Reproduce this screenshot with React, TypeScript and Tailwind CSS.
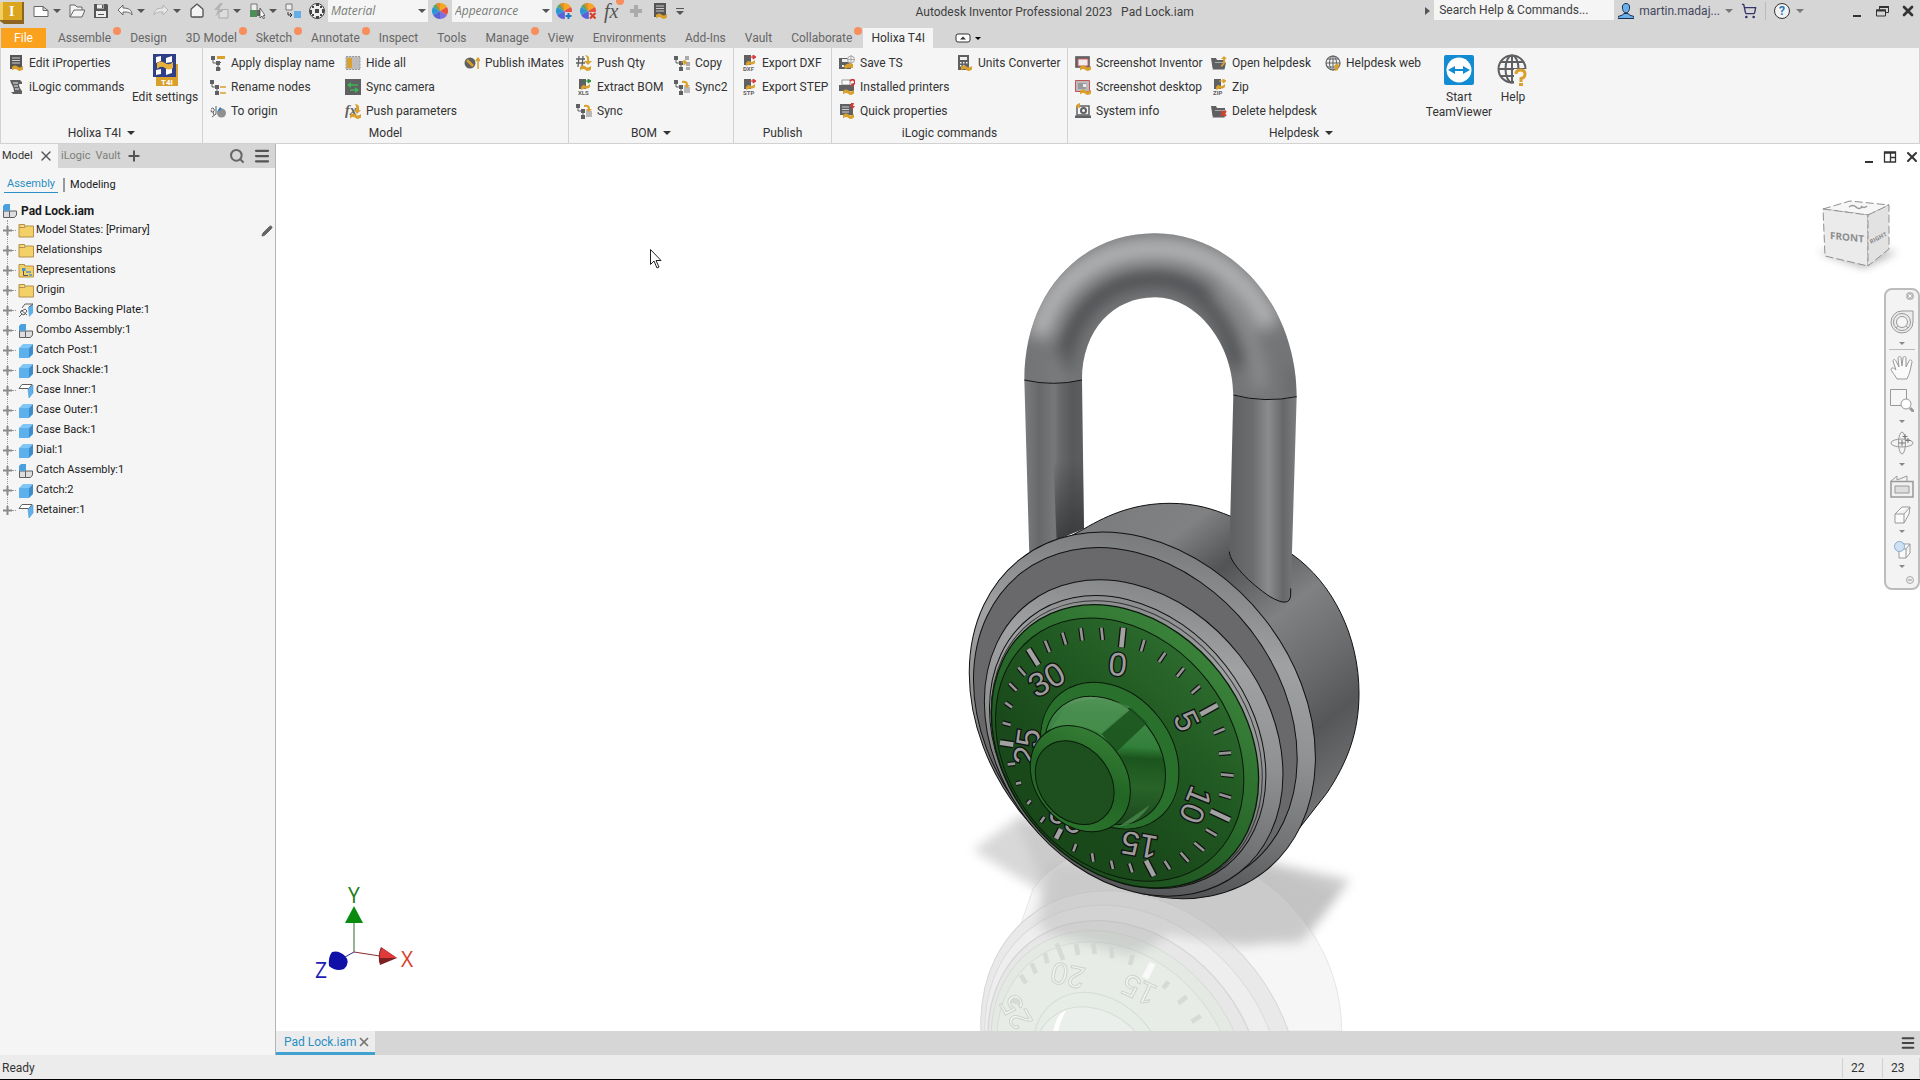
import type { ReactNode } from "react"
import { Search, Menu, Plus, X, Pencil, Home, ShoppingCart } from "lucide-react"

const G = "#5f6062"
const Y = "#d9a02c"

type IconName = keyof typeof icons

const Wheel = () => (
  <>
    <path d="M8 8L8 0A8 8 0 0 1 14.9 4Z" fill="#f5a623" />
    <path d="M8 8L14.9 4A8 8 0 0 1 14.9 12Z" fill="#e9503f" />
    <path d="M8 8L14.9 12A8 8 0 0 1 8 16Z" fill="#7d6fe0" />
    <path d="M8 8L8 16A8 8 0 0 1 1.1 12Z" fill="#5a62d8" />
    <path d="M8 8L1.1 12A8 8 0 0 1 1.1 4Z" fill="#2b95d6" />
    <path d="M8 8L1.1 4A8 8 0 0 1 8 0Z" fill="#5aa66a" />
    <path d="M8 8L4 1.1A8 8 0 0 1 8 0Z" fill="#f08a24" />
  </>
)

const Wave = ({ x = 4, y = 11 }: { x?: number; y?: number }) => (
  <path
    d={`M${x} ${y + 1}q3 -2.5 5.5 -.5t5.5 -.5v3.5q-3 2.5 -5.5 .5t-5.5 .5z`}
    fill={Y}
  />
)

const Tree = ({ x = 0 }: { x?: number }) => (
  <>
    <path d={`M${x + 2} 3v5h4M${x + 7} 8v6`} fill="none" stroke={G} />
    <path d={`M${x} 1h4v4h-4zM${x + 5} 6h4v4h-4zM${x + 5} 12h4v4h-4z`} fill={G} />
  </>
)

const Folder = () => (
  <path d="M0 3h5l1 2h8v2H4l-2 6H1.500zM3.500 7.500H15l-1.500 7H1.500z" fill={G} />
)

const File = ({ tag, arrow }: { tag: string; arrow: string }) => (
  <>
    <path d="M3 0h7v10H3z" fill={G} />
    <path d="M5 8q2-3 4-1.500T14 5v3q-2 2-4 1.500T5 11z" fill={Y} />
    <path d="M8 2h5M12 0l3 2-3 2z" stroke={arrow} fill={arrow} />
    <text x="2" y="16" fontSize="6" fontWeight="700" fill={G}>{tag}</text>
  </>
)

const icons = {
  file: <path d="M1 3.500h9l5 4v6H1zM10 3.500v4h5" fill="#fdfdfd" stroke="#666" />,
  open: <path d="M1 14V2h5l2 2h5v3M1 14L5 7h11l-3 7z" fill="#f4f4f4" stroke="#666" />,
  save: (
    <>
      <path d="M1 1h13l1 1v13H1z" fill="#555" />
      <path d="M4 1.500h7v4H4zM3 8h10v6H3z" fill="#eee" />
      <path d="M9 2h1.500v3H9zM5 11h6v1H5z" fill="#555" />
    </>
  ),
  undo: <path d="M1 7l5-5v3c6 0 9 2 9 7-2-3-4-3-9-3v3z" fill="#f4f4f4" stroke="#666" />,
  redo: <path d="M15 7l-5-5v3c-6 0-9 2-9 7 2-3 4-3 9-3v3z" fill="#e6e6e6" stroke="#b3b3b3" />,
  update: (
    <>
      <path d="M7 0L1 7h4l-3 7 8-8H6l4-6z" fill="#b4b4b4" />
      <path d="M6 8.500h3v-2h6V15H6z" fill="#ddd" stroke="#aaa" />
    </>
  ),
  select: (
    <>
      <path d="M2 1h6v7H2z" fill="#eee" stroke="#777" />
      <path d="M1 7h7v7H1z" fill="#4f8d57" />
      <path d="M8 7h4v6H8z" fill="#666" />
      <path d="M11 5v10l2-2 1.500 3 1-1-1.200-2.500H16z" fill="#fff" stroke="#333" strokeWidth=".7" />
    </>
  ),
  link: (
    <>
      <path d="M1 1h6v6H1z" fill="#eee" stroke="#777" />
      <path d="M9 8h7v7H9z" fill="#62aee6" />
      <path d="M3 9v3h3M5 10l2 2-2 2" fill="none" stroke="#333" />
    </>
  ),
  ball: (
    <>
      <circle cx="8" cy="8" r="7.500" fill="#eee" stroke="#444" />
      <path d="M6 6h4v4H6zM7 0h3v3H7zM1 7h2v4H1zM13 6h2v4h-2zM7 13h3v3H7zM3 3h2v2H3zM11 3h2v2h-2zM3 11h2v2H3zM11 11h2v2h-2z" fill="#444" />
    </>
  ),
  wheel: <Wheel />,
  wheelAdjust: (
    <>
      <Wheel />
      <path d="M9 9h7v7H9z" fill="#d8d8d8" />
      <path d="M12.500 10v6M9.500 13h6" stroke="#1c78c0" strokeWidth="2" />
    </>
  ),
  wheelClear: (
    <>
      <Wheel />
      <path d="M9 9h7v7H9z" fill="#d8d8d8" />
      <path d="M10 10l5.500 5.500M15.500 10L10 15.500" stroke="#d8402c" strokeWidth="2.200" />
    </>
  ),
  plus: <path d="M6 2h4v4h4v4h-4v4H6v-4H2V6h4z" fill="#aaa" />,
  doc: (
    <>
      <path d="M2 0h12v14H2z" fill="#555" />
      <path d="M4 3h8M4 5.500h8M4 8h8" stroke="#ccc" />
      <Wave />
    </>
  ),
  script: (
    <>
      <path d="M2 1h10l2 2v2h-3q0 2 1 4t2 3v3H5l-2-2h3q0-3-1-5T3 4z" fill={G} />
      <path d="M5 4h5M6 7h4M7 10h4" stroke="#eee" />
    </>
  ),
  treeName: (
    <>
      <Tree x={1} />
      <path d="M7 1h8v3H7z" fill={Y} />
      <path d="M9 7.500h2M9 14h2" stroke={G} />
    </>
  ),
  treeRename: (
    <>
      <Tree />
      <path d="M10 8h6M10 14h6" stroke={Y} strokeWidth="1.500" />
    </>
  ),
  origin: (
    <>
      <circle cx="11.500" cy="10" r="4.500" fill="#909090" />
      <path d="M6 3v8M6 11l-4 3" stroke={G} />
      <path d="M1 6q2-2 3 0t-1 3-2-2M3 9l1 3" stroke={G} fill="none" />
      <path d="M7 9l3-5 2 2z" fill="#2a7cc0" />
    </>
  ),
  hide: (
    <>
      <path d="M1 1.500h14v13H1z" fill="#bdbdbd" stroke="#999" strokeDasharray="2 1" />
      <path d="M2 3h5v10H2z" fill={Y} />
    </>
  ),
  camera: (
    <>
      <path d="M0 0h16v16H0z" fill={G} />
      <path d="M13 6H5M13 11H5" stroke="#3eb557" strokeWidth="1.500" />
      <path d="M6 3v6L2 6zM10 8v6l4-3z" fill="#3eb557" />
    </>
  ),
  params: (
    <>
      <text x="0" y="12" fontSize="14" fontStyle="italic" fontWeight="700" fontFamily="Liberation Serif, serif" fill={G}>fx</text>
      <path d="M10 1q5 0 4 6h2l-4 4-3-4h2q1-3-1-6z" fill={Y} />
      <Wave x={5} />
    </>
  ),
  mates: (
    <>
      <circle cx="6" cy="8" r="5.500" fill={G} />
      <path d="M3 5l6 6" stroke={Y} strokeWidth="2.500" />
      <path d="M14 14V4M12 6l2-3 2 3" stroke={Y} fill="none" strokeWidth="1.500" />
    </>
  ),
  qty: (
    <>
      <path d="M3 1L2 12M7 1L6 12M0 4h9M0 8h9" stroke={G} strokeWidth="1.300" />
      <path d="M9 0q5 0 4 6h3l-4 4-4-4h3q1-3-2-6z" fill={Y} />
      <Wave />
    </>
  ),
  xls: <File tag="XLS" arrow="#2f8a3c" />,
  dxf: <File tag="DXF" arrow="#d23a3a" />,
  stp: <File tag="STP" arrow="#d23a3a" />,
  zip: <File tag="ZIP" arrow={Y} />,
  sync: (
    <>
      <Tree />
      <path d="M10 7h3l1 1h2v6h-6z" fill="#b9b9b9" />
      <path d="M8 2q6-1 6 4h2l-3 3-3-3h2q0-3-4-2z" fill={Y} />
    </>
  ),
  copy: (
    <>
      <Tree />
      <path d="M11 1h4v4h-4zM12 7h4v4h-4zM12 12h4v3h-4z" fill="#aaa" />
      <path d="M7 7h5M10 5l3 2.500-3 2.500z" stroke={Y} fill={Y} />
    </>
  ),
  disk: (
    <>
      <path d="M0 3h12v11H0z" fill={G} />
      <path d="M3 4h6v3H3zM3 10h2v2H3z" fill="#eee" />
      <circle cx="12" cy="4.500" r="3.500" fill="#eee" stroke="#aaa" />
      <path d="M12 0v9M8 4.500h8" stroke="#aaa" />
      <path d="M5 11q4-4 9-2v4q-5-1-8 1z" fill={Y} />
    </>
  ),
  printer: (
    <>
      <path d="M3 1h8v5H3z" fill="#fafafa" stroke="#999" />
      <path d="M0 6h15v6H0z" fill={G} />
      <path d="M11 2q3-3 4.500 0T13 5.500V8" fill="none" stroke="#d23a3a" strokeWidth="1.800" />
      <Wave />
    </>
  ),
  quick: (
    <>
      <path d="M1 1h13v11H1z" fill={G} />
      <path d="M3 4h7M3 6.500h7M3 9h7" stroke="#ccc" />
      <path d="M12 0h3l-1 3h2l-4 5 1-4h-2z" fill="#d23a3a" />
      <Wave />
    </>
  ),
  calc: (
    <>
      <path d="M1 0h11v15H1z" fill={G} />
      <path d="M3 2h7v3H3zM3 7h1.500v1.500H3zM6 7h1.500v1.500H6zM9 7h1.500v1.500H9zM3 10h1.500v1.500H3zM6 10h1.500v1.500H6z" fill="#f0f0f0" />
      <Wave y={11} />
    </>
  ),
  shotApp: (
    <>
      <path d="M.5 1.500h14v11H.5z" fill="#5f6062" stroke="#777" />
      <path d="M3 4h10v7H3z" fill="#eee" stroke="#d06060" />
      <Wave x={5} />
    </>
  ),
  shotDesk: (
    <>
      <path d="M.5 1.500h14v11H.5z" fill="#bbb" stroke="#c25555" />
      <path d="M3 4h8v6H3z" fill="#999" />
      <path d="M8 5h3v3H8z" fill="#eee" />
      <Wave x={5} />
    </>
  ),
  system: (
    <>
      <path d="M2 3h12v9H2z" fill="#f5f5f5" stroke={G} strokeWidth="1.500" />
      <path d="M0 12.500h16V15H0z" fill={G} />
      <circle cx="8.500" cy="7.500" r="2.500" fill="none" stroke={G} strokeWidth="2" />
      <path d="M1 4q0-3 4-4v5z" fill={Y} />
    </>
  ),
  helpOpen: (
    <>
      <Folder />
      <path d="M10 10q3-1 2-6h-2l3-3 3 3h-2q1 6-4 8z" fill={Y} />
    </>
  ),
  helpDelete: (
    <>
      <Folder />
      <path d="M10 8l5 5M15 8l-5 5" stroke="#d8402c" strokeWidth="2" />
    </>
  ),
  web: (
    <>
      <path d="M8 1v13M1 8h14M2.500 4h11M2.500 12h8" stroke={G} />
      <circle cx="8" cy="8" r="7" fill="none" stroke={G} strokeWidth="1.200" />
      <ellipse cx="8" cy="8" rx="3.500" ry="7" fill="none" stroke={G} />
      <path d="M10 16v-4l-1-1 3-3 3 3-2 1v3z" fill={Y} />
    </>
  ),
  user: (
    <>
      <path d="M0 15.500v-2q5-1 6-3h4q1 2 6 3v2z" fill="#6ab0ea" stroke="#1d2f4a" />
      <path d="M8 .5c4 0 4 4 3 7s-5 3-6 0-1-7 3-7z" fill="#6ab0ea" stroke="#1d2f4a" />
    </>
  ),
  folder: (
    <path d="M1 3V1.500h5.500V3H15.500V14H1zM1 4.500h6V3" fill="#f4d168" stroke="#b5914a" />
  ),
  folderTree: (
    <>
      <path d="M1 3V1.500h5.500V3H15.500V14H1z" fill="#f4d168" stroke="#b5914a" />
      <path d="M5.500 8v4.500H10" fill="none" stroke="#555" />
      <path d="M4 5h3.500v3H4z" fill="#4b94c8" />
      <path d="M8 9h5M11 12h3" stroke="#4b94c8" strokeWidth="1.500" />
    </>
  ),
  plate: (
    <>
      <path d="M10 4l5-3v9l-4 4z" fill="#5fb0ea" />
      <path d="M4 5l3-4h8l-4 3M1 14l3-3M3 7l6 5M4 11l-2-2 5-3 2 2-3 4z" fill="#f4f4f4" stroke={G} />
    </>
  ),
  assembly: (
    <>
      <path d="M1.500 8h6v6.500h-6zM7.500 8h7v4l-2 2.500h-5z" fill="#ddd" stroke={G} />
      <path d="M1 3l2-2h5v6l-1 1H1z" fill="#4aa0dd" />
    </>
  ),
  part: (
    <>
      <path d="M1 5h10v10H1z" fill="#5cb0ec" />
      <path d="M1 5l4-4h10l-4 4z" fill="#7fc6f6" />
      <path d="M15 1v10l-4 4V5z" fill="#3d8ccb" />
    </>
  ),
  sheet: (
    <>
      <path d="M1 5.500l3-4h10l-3 4z" fill="#fff" stroke={G} />
      <path d="M10 6l5-4v8l-4 5z" fill="#5fb0ea" stroke="#3f90cc" strokeWidth=".5" />
    </>
  ),
}

const Icon = ({ name }: { name: IconName }) => (
  <svg viewBox="0 0 16 16" className="h-4 w-4 shrink-0" aria-hidden="true">
    {icons[name]}
  </svg>
)

const Caret = ({ className = "text-[#555]" }: { className?: string }) => (
  <svg viewBox="0 0 8 4" className={`h-1 w-2 shrink-0 ${className}`} aria-hidden="true">
    <path d="M0 0h8L4 4z" fill="currentColor" />
  </svg>
)

const Tool = ({ name, label, menu }: { name: IconName; label: string; menu?: boolean }) => (
  <button aria-label={label} className="flex items-center gap-1">
    <Icon name={name} />
    {menu && <Caret />}
  </button>
)

const Combo = ({ label }: { label: string }) => (
  <div className="relative h-[22px] w-[100px]">
    <select
      aria-label={label}
      className="h-full w-full appearance-none bg-[#f5f5f5] pl-[3px] pb-px text-xs italic text-[#777d77] font-[Open_Sans,sans-serif]"
    >
      <option>{label}</option>
    </select>
    <Caret className="absolute right-0.5 top-[9px] text-[#555]" />
  </div>
)

const TitleBar = () => (
  <header className="flex h-7 items-start">
    <svg viewBox="0 0 24 24" className="h-6 w-6" role="img" aria-label="Inventor">
      <path d="M0 4l4-2h20v22H4l-4-3z" fill="#8d6420" />
      <path d="M0 3l3-1v18H0z" fill="#f1cf62" />
      <path d="M3 2h19v18H3z" fill="#dca51f" />
      <text x="9" y="16" fontSize="14" fontWeight="700" fontFamily="Liberation Serif, serif" fill="#fff">I</text>
    </svg>
    <div className="ml-[9px] flex h-[22px] items-center gap-2">
      <Tool name="file" label="New" menu />
      <Tool name="open" label="Open" />
      <Tool name="save" label="Save" />
      <Tool name="undo" label="Undo" menu />
      <Tool name="redo" label="Redo" menu />
      <button aria-label="Home">
        <Home className="h-4 w-4 fill-[#f4f4f4] text-[#555]" />
      </button>
      <Tool name="update" label="Update" menu />
      <Tool name="select" label="Select" menu />
      <Tool name="link" label="Assign" />
      <Tool name="ball" label="Material browser" />
    </div>
    <div className="ml-[3px] flex items-center gap-1">
      <Combo label="Material" />
      <Tool name="wheel" label="Appearance browser" />
      <Combo label="Appearance" />
    </div>
    <div className="ml-1 flex h-[22px] items-center gap-2">
      <Tool name="wheelAdjust" label="Adjust appearance" />
      <Tool name="wheelClear" label="Clear appearance" />
      <button aria-label="Parameters" className="relative w-4 text-left font-[Liberation_Serif,serif] text-xl leading-4 italic text-[#555]">
        fx
        <span className="absolute -right-1 -top-1.5 h-2 w-2 rounded-full bg-[#f78e5c]" />
      </button>
      <Tool name="plus" label="Add" />
      <Tool name="doc" label="iProperties" />
      <button aria-label="Customize" className="flex flex-col items-center gap-0.5">
        <span className="h-px w-2 bg-[#555]" />
        <Caret />
      </button>
    </div>
    <h1 className="flex-1 text-center leading-6 whitespace-pre text-[#3f3f3f]">
      {"Autodesk Inventor Professional 2023   Pad Lock.iam"}
    </h1>
    <div className="flex h-[22px] items-center">
      <svg viewBox="0 0 5 8" className="mr-1 h-2 w-[5px]" aria-hidden="true">
        <path d="M0 0l5 4-5 4z" fill="#555" />
      </svg>
      <input
        aria-label="Search"
        placeholder="Search Help & Commands..."
        className="mr-1 h-5 w-[180px] self-start bg-[#f5f5f5] px-[5px] placeholder:text-[#3f3f3f] placeholder:opacity-100"
      />
      <button className="flex items-center gap-[5px] text-[#44475c]">
        <Icon name="user" />
        martin.madaj...
        <Caret className="text-[#777]" />
      </button>
      <button aria-label="Store" className="ml-2">
        <ShoppingCart className="h-4 w-4 text-[#34346c]" />
      </button>
      <span className="mx-2 h-[18px] w-px bg-[#bbb]" />
      <button aria-label="Help" className="flex items-center gap-1.5">
        <span className="flex h-4 w-4 items-center justify-center rounded-full border border-[#333] bg-[#f2f2f2] font-bold text-[#2a78b8]">?</span>
        <Caret className="text-[#777]" />
      </button>
      <div className="ml-[46px] mr-1 flex items-center gap-[11px] text-[#333]">
        <button aria-label="Minimize">
          <svg viewBox="0 0 14 14" className="h-3.5 w-3.5"><path d="M3 11h8v2H3z" fill="currentColor" /></svg>
        </button>
        <button aria-label="Restore">
          <svg viewBox="0 0 14 14" className="h-3.5 w-3.5">
            <path d="M4.500 5.500v-3h9v6h-3M1.500 6h9v6h-9z" fill="none" stroke="currentColor" />
            <path d="M4 2h10v2H4zM1 5.500h10v2H1z" fill="currentColor" />
          </svg>
        </button>
        <button aria-label="Close"><X className="h-4 w-4" strokeWidth={4} /></button>
      </div>
    </div>
  </header>
)

const tabs = [
  { label: "Assemble", dot: true },
  { label: "Design" },
  { label: "3D Model", dot: true },
  { label: "Sketch", dot: true },
  { label: "Annotate", dot: true },
  { label: "Inspect" },
  { label: "Tools" },
  { label: "Manage", dot: true },
  { label: "View" },
  { label: "Environments" },
  { label: "Add-Ins" },
  { label: "Vault" },
  { label: "Collaborate", dot: true },
]

const TabRow = () => (
  <nav className="flex h-5 items-stretch pl-px leading-5 text-[#666]">
    <button className="w-[45px] bg-[#faa21e] text-white">File</button>
    <div className="ml-0.5 flex">
      {tabs.map((tab) => (
        <button key={tab.label} className="relative pl-2.5 pr-[9px]">
          {tab.label}
          {tab.dot && <span className="absolute -right-px -top-px h-2 w-2 rounded-full bg-[#f78e5c]" />}
        </button>
      ))}
    </div>
    <button className="ml-0.5 bg-[#f5f5f5] px-2 text-[#333]">Holixa T4I</button>
    <button aria-label="Ribbon display" className="ml-[22px] flex items-center gap-1">
      <svg viewBox="0 0 16 10" className="h-2.5 w-4">
        <rect x="1" y="1" width="14" height="8" rx="2" fill="#fff" stroke="#333" />
        <path d="M5 6.500h6L8 3.500z" fill="#333" />
      </svg>
      <svg viewBox="0 0 6 3" className="h-[3px] w-1.5"><path d="M0 0h6L3 3z" fill="#000" /></svg>
    </button>
  </nav>
)

type Item = { icon: IconName; label: string }

const Column = ({ items, className = "" }: { items: Item[]; className?: string }) => (
  <div className={className}>
    {items.map((item) => (
      <button key={item.label} className="flex h-6 items-center gap-[5px] whitespace-nowrap">
        <Icon name={item.icon} />
        {item.label}
      </button>
    ))}
  </div>
)

const Group = ({ title, menu, className, children }: { title: string; menu?: boolean; className: string; children: ReactNode }) => (
  <section className={`flex shrink-0 flex-col border-[#d2d2d2] ${className}`}>
    <div className="flex flex-1 pl-[7px] pt-[3px]">{children}</div>
    <h2 className="flex h-5 items-center justify-center gap-1.5">
      {title}
      {menu && <Caret className="text-[#333]" />}
    </h2>
  </section>
)

const BigButton = ({ label, className = "", children }: { label: ReactNode; className?: string; children: ReactNode }) => (
  <button className={`flex flex-col items-center gap-1 pt-[3px] leading-[15px] ${className}`}>
    {children}
    <span>{label}</span>
  </button>
)

const Ribbon = () => (
  <div className="flex h-24 overflow-hidden border-x border-b border-[#d2d2d2] bg-[#f5f5f5] text-[#333]">
    <Group title="Holixa T4I" menu className="w-[202px] border-r">
      <Column
        className="w-[121px]"
        items={[
          { icon: "doc", label: "Edit iProperties" },
          { icon: "script", label: "iLogic commands" },
        ]}
      />
      <BigButton label="Edit settings" className="w-[72px] whitespace-nowrap">
        <svg viewBox="0 0 32 32" className="h-8 w-8">
          <path d="M7 10h22v22H7z" fill="#d9a02c" />
          <path d="M4 0h23v23H4z" fill="#2f3f87" />
          <path d="M7 3l5-1v5l-5 2zM17 4l6-2v6l-6 1zM7 16l5-1v5l-5 1zM17 15l6-1v5l-6 2z" fill="#fff" />
          <path d="M8 9q4-3 8 0t8-1v6q-4 3-8 0t-8 1z" fill="#e8b13a" />
          <text x="12" y="31" fontSize="8" fontWeight="700" fill="#fff">T4I</text>
        </svg>
      </BigButton>
    </Group>
    <Group title="Model" className="w-[366px] border-r">
      <Column
        className="w-[135px]"
        items={[
          { icon: "treeName", label: "Apply display name" },
          { icon: "treeRename", label: "Rename nodes" },
          { icon: "origin", label: "To origin" },
        ]}
      />
      <Column
        className="w-[119px]"
        items={[
          { icon: "hide", label: "Hide all" },
          { icon: "camera", label: "Sync camera" },
          { icon: "params", label: "Push parameters" },
        ]}
      />
      <Column items={[{ icon: "mates", label: "Publish iMates" }]} />
    </Group>
    <Group title="BOM" menu className="w-[165px] border-r">
      <Column
        className="w-[98px]"
        items={[
          { icon: "qty", label: "Push Qty" },
          { icon: "xls", label: "Extract BOM" },
          { icon: "sync", label: "Sync" },
        ]}
      />
      <Column
        items={[
          { icon: "copy", label: "Copy" },
          { icon: "sync", label: "Sync2" },
        ]}
      />
    </Group>
    <Group title="Publish" className="w-[98px] border-r">
      <Column
        items={[
          { icon: "dxf", label: "Export DXF" },
          { icon: "stp", label: "Export STEP" },
        ]}
      />
    </Group>
    <Group title="iLogic commands" className="w-[236px] border-r">
      <Column
        className="w-[118px]"
        items={[
          { icon: "disk", label: "Save TS" },
          { icon: "printer", label: "Installed printers" },
          { icon: "quick", label: "Quick properties" },
        ]}
      />
      <Column items={[{ icon: "calc", label: "Units Converter" }]} />
    </Group>
    <Group title="Helpdesk" menu className="w-[466px]">
      <Column
        className="w-[136px]"
        items={[
          { icon: "shotApp", label: "Screenshot Inventor" },
          { icon: "shotDesk", label: "Screenshot desktop" },
          { icon: "system", label: "System info" },
        ]}
      />
      <Column
        className="w-[114px]"
        items={[
          { icon: "helpOpen", label: "Open helpdesk" },
          { icon: "zip", label: "Zip" },
          { icon: "helpDelete", label: "Delete helpdesk" },
        ]}
      />
      <Column className="w-[98px]" items={[{ icon: "web", label: "Helpdesk web" }]} />
      <BigButton label={<>Start<br />TeamViewer</>} className="w-[72px]">
        <svg viewBox="0 0 32 32" className="h-8 w-8">
          <rect x="1" y="1" width="30" height="30" rx="2" fill="#138bd3" />
          <circle cx="16" cy="16" r="12.500" fill="#fff" />
          <path d="M5 16l7-4v3h8v-3l7 4-7 4v-3h-8v3z" fill="#138bd3" />
        </svg>
      </BigButton>
      <BigButton label="Help" className="w-9">
        <svg viewBox="0 0 32 32" className="h-8 w-8">
          <g fill="none" stroke={G} strokeWidth="2">
            <circle cx="15" cy="15" r="13.500" />
            <ellipse cx="15" cy="15" rx="6.500" ry="13.500" />
            <path d="M15 1v28M1 15h28M4 8h22M4 22h22" />
          </g>
          <path d="M17 15h13v17H17z" fill="#f5f5f5" />
          <path d="M19 20q0-4 4.500-4t4.500 4-4 4.500V28" fill="none" stroke={Y} strokeWidth="3" />
          <path d="M22 29h4v3h-4z" fill={Y} />
        </svg>
      </BigButton>
    </Group>
  </div>
)

const nodes: Item[] = [
  { icon: "folder", label: "Model States: [Primary]" },
  { icon: "folder", label: "Relationships" },
  { icon: "folderTree", label: "Representations" },
  { icon: "folder", label: "Origin" },
  { icon: "plate", label: "Combo Backing Plate:1" },
  { icon: "assembly", label: "Combo Assembly:1" },
  { icon: "part", label: "Catch Post:1" },
  { icon: "part", label: "Lock Shackle:1" },
  { icon: "sheet", label: "Case Inner:1" },
  { icon: "part", label: "Case Outer:1" },
  { icon: "part", label: "Case Back:1" },
  { icon: "part", label: "Dial:1" },
  { icon: "assembly", label: "Catch Assembly:1" },
  { icon: "part", label: "Catch:2" },
  { icon: "sheet", label: "Retainer:1" },
]

const Browser = () => (
  <aside className="flex w-[276px] shrink-0 flex-col border-r border-[#b4b4b4] bg-[#f5f5f5] text-[11px] text-[#1a1a1a]">
    <div className="flex h-6 items-center bg-[#d6d6d6] text-[#7d8078]">
      <div className="flex h-full w-[58px] items-center justify-between bg-[#f5f5f5] pl-0.5 pr-1 text-[#333]">
        <button>Model</button>
        <button aria-label="Close panel"><X className="h-4 w-4 text-[#555]" /></button>
      </div>
      <button className="ml-[3px]">iLogic</button>
      <button className="ml-[5px]">Vault</button>
      <button aria-label="Add panel" className="ml-[5px]"><Plus className="h-4 w-4 text-[#555]" strokeWidth={3} /></button>
      <button aria-label="Search" className="ml-auto"><Search className="h-4 w-4 text-[#666]" strokeWidth={3} /></button>
      <button aria-label="Menu" className="ml-2 mr-1"><Menu className="h-[18px] w-[18px] text-[#555]" strokeWidth={3} /></button>
    </div>
    <div className="flex h-8 items-center pl-1 pt-0.5">
      <button className="border-b border-[#2a8fc4] px-[3px] text-[#2a8fc4]">Assembly</button>
      <span className="mx-[5px] h-3.5 w-0.5 bg-[#999]" />
      <button>Modeling</button>
    </div>
    <div className="flex h-5 items-center gap-[3px] pl-0.5 pt-0.5 text-xs font-bold">
      <Icon name="assembly" />
      Pad Lock.iam
    </div>
    <ul className="relative">
      <li aria-hidden="true" className="absolute bottom-2.5 left-[7px] top-0 border-l border-dotted border-[#999]" />
      {nodes.map((node, i) => (
        <li key={node.label} className="relative flex h-5 items-center pl-[3px] pt-px">
          <button aria-label={`Expand ${node.label}`} className="bg-[#f5f5f5]">
            <svg viewBox="0 0 9 9" className="h-[9px] w-[9px]"><path d="M3.500 0h2v9h-2zM0 3.500h9v2H0z" fill="#8a8a8a" /></svg>
          </button>
          <span className="mr-0.5 w-1 border-t border-dotted border-[#999]" />
          <Icon name={node.icon} />
          <span className="ml-0.5">{node.label}</span>
          {i === 0 && (
            <button aria-label="Edit" className="ml-auto mr-0.5">
              <Pencil className="h-3 w-3 fill-[#666] text-[#666]" />
            </button>
          )}
        </li>
      ))}
    </ul>
  </aside>
)

const majorTicks = "M520 443L514 502M803 675L752 703M782 993L840 1020M588 1142L612 1188M333 1047L318 1076M150 788L190 794M235 507L265 555"
const minorTicks =
  "M583 480L573 514M646 518L627 546M702 564L681 590M750 618L725 640M824 746L791 760M843 818L807 821M851 887L813 883M808 943L843 953" +
  "M768 1048L800 1067M733 1088L762 1112M692 1118L716 1145M644 1143L660 1168M538 1150L547 1177M483 1142L489 1167M426 1120L430 1145M378 1092L370 1114" +
  "M283 1011L272 1027M242 961L232 972M213 908L198 911M195 851L173 853M158 728L182 735M166 668L186 682M178 610L200 632M205 562L226 586" +
  "M285 482L299 516M337 458L348 494M392 444L397 482M454 443L458 480"

const dialNumbers = [
  { n: "0", x: 503, y: 553, a: 5 },
  { n: "5", x: 710, y: 722, a: 64 },
  { n: "10", x: 737, y: 975, a: 112 },
  { n: "15", x: 568, y: 1095, a: 190 },
  { n: "20", x: 352, y: 1012, a: 210 },
  { n: "25", x: 230, y: 800, a: 278 },
  { n: "30", x: 290, y: 598, a: 330 },
]

const Ring = ({ cx, cy, rx, ry, ...rest }: { cx: number; cy: number; rx: number; ry: number; fill?: string; stroke?: string; strokeWidth?: number }) => (
  <ellipse cx={cx} cy={cy} rx={rx} ry={ry} transform={`rotate(52 ${cx} ${cy})`} {...rest} />
)

const shackle =
  "M223 -300C223 -560 390 -740 615 -740C850 -740 1040 -520 1040 -250Q945 -230 850 -255C850 -410 740 -548 615 -548C490 -548 396 -450 396 -300Q310 -280 223 -300Z"

const PadLock = () => (
  <svg viewBox="0 -780 1350 2433" className="absolute left-[674px] top-[76px] h-[811px] w-[450px]" role="img" aria-label="Pad lock model">
    <defs>
      <linearGradient id="legL">
        <stop offset="0" stopColor="#7b7c7e" />
        <stop offset=".25" stopColor="#67686a" />
        <stop offset=".5" stopColor="#77787a" />
        <stop offset=".6" stopColor="#68696b" />
        <stop offset=".8" stopColor="#58595b" />
        <stop offset="1" stopColor="#5d5e60" />
      </linearGradient>
      <linearGradient id="legShade" x1="0" y1="0" x2="0" y2="1">
        <stop offset="0" stopColor="#2f3031" stopOpacity="0" />
        <stop offset="1" stopColor="#2f3031" stopOpacity=".75" />
      </linearGradient>
      <linearGradient id="legR">
        <stop offset="0" stopColor="#5f6062" />
        <stop offset=".35" stopColor="#6c6d6f" />
        <stop offset=".58" stopColor="#8b8c8e" />
        <stop offset=".8" stopColor="#666769" />
        <stop offset="1" stopColor="#7c7d7f" />
      </linearGradient>
      <linearGradient id="body" gradientUnits="userSpaceOnUse" x1="500" y1="100" x2="1150" y2="950">
        <stop offset="0" stopColor="#7c7d7f" />
        <stop offset=".15" stopColor="#808183" />
        <stop offset=".3" stopColor="#525355" />
        <stop offset=".5" stopColor="#808183" />
        <stop offset=".68" stopColor="#6a6b6d" />
        <stop offset=".82" stopColor="#565759" />
        <stop offset="1" stopColor="#717274" />
      </linearGradient>
      <linearGradient id="rim" gradientUnits="userSpaceOnUse" x1="100" y1="400" x2="800" y2="1200">
        <stop offset="0" stopColor="#77787a" />
        <stop offset=".3" stopColor="#a0a1a2" />
        <stop offset=".55" stopColor="#909193" />
        <stop offset=".8" stopColor="#727375" />
        <stop offset="1" stopColor="#505153" />
      </linearGradient>
      <linearGradient id="edge" gradientUnits="userSpaceOnUse" x1="500" y1="380" x2="700" y2="1240">
        <stop offset="0" stopColor="#3c853c" />
        <stop offset=".5" stopColor="#276629" />
        <stop offset="1" stopColor="#184418" />
      </linearGradient>
      <linearGradient id="dial" gradientUnits="userSpaceOnUse" x1="480" y1="410" x2="620" y2="1210">
        <stop offset="0" stopColor="#2f6e30" />
        <stop offset=".35" stopColor="#215a22" />
        <stop offset=".7" stopColor="#1a4a1b" />
        <stop offset="1" stopColor="#184618" />
      </linearGradient>
      <linearGradient id="cone" gradientUnits="userSpaceOnUse" x1="290" y1="700" x2="610" y2="980">
        <stop offset="0" stopColor="#76a876" />
        <stop offset=".2" stopColor="#44884a" />
        <stop offset=".42" stopColor="#31803a" />
        <stop offset=".5" stopColor="#1b551d" />
        <stop offset=".7" stopColor="#286428" />
        <stop offset="1" stopColor="#1c451d" />
      </linearGradient>
      <linearGradient id="knob" gradientUnits="userSpaceOnUse" x1="300" y1="740" x2="480" y2="1060">
        <stop offset="0" stopColor="#388138" />
        <stop offset=".5" stopColor="#226524" />
        <stop offset="1" stopColor="#2d782f" />
      </linearGradient>
      <filter id="soft" x="-20%" y="-20%" width="140%" height="140%"><feGaussianBlur stdDeviation="16" /></filter>
      <filter id="softer" x="-20%" y="-20%" width="140%" height="140%"><feGaussianBlur stdDeviation="24" /></filter>
      <clipPath id="shackleClip"><path d={shackle} /></clipPath>
    </defs>

    {/* floor shadow */}
    <g filter="url(#soft)">
      <path d="M70 1110L220 1000L500 1180L280 1240Z" fill="#d8d8d8" />
      <path d="M200 1020L480 1080L930 1140L1200 1200L1060 1385H960L880 1395L650 1365L600 1400L540 1425L250 1350L280 1230Z" fill="#cbcbcb" />
    </g>

    {/* reflection */}
    <g opacity=".85">
      <path d="M250 1225C330 1120 450 1090 600 1090C900 1090 1175 1340 1175 1653H100Z" fill="#e9e9ea" opacity=".5" stroke="#c4c4c4" strokeWidth="3" />
      <Ring cx={570} cy={1735} rx={540} ry={435} fill="#e6e6e6" stroke="#d0d0d0" strokeWidth={3} />
      <Ring cx={550} cy={1745} rx={505} ry={405} fill="#ececec" stroke="#d6d6d6" strokeWidth={3} />
      <Ring cx={525} cy={1755} rx={465} ry={375} fill="#e2e3e2" stroke="#d0d0d0" strokeWidth={4} />
      <Ring cx={510} cy={1760} rx={440} ry={350} fill="#e0e6e0" stroke="#d2d6d2" strokeWidth={3} />
      <Ring cx={500} cy={1765} rx={410} ry={325} fill="#e3e9e3" stroke="#d2d8d2" strokeWidth={3} />
      <path d="M300 1150L900 1150L1160 1240L1040 1385L880 1395L650 1365L600 1400L540 1425L270 1350Z" fill="#b4b4b4" opacity=".4" filter="url(#soft)" />
      <g stroke="#d0d5d0" strokeWidth="14">
        <path d="M320 1390L340 1440M378 1392L384 1425M430 1390L434 1422M483 1402L487 1435M548 1425L540 1455M655 1505L640 1525M710 1550L685 1570M752 1608L725 1625M285 1420L292 1450M245 1450L258 1480M212 1485L228 1510M180 1560L215 1570" />
        <path d="M608 1450L585 1495" stroke="#f8f8f8" strokeWidth="20" />
      </g>
      <g fontSize="92" fontFamily="Liberation Sans, sans-serif" fill="#f0f2f0" stroke="#c6ccc6" strokeWidth="3" textAnchor="middle">
        <text transform="translate(360 1455) rotate(192)">20</text>
        <text transform="translate(580 1500) rotate(205)">15</text>
        <text transform="translate(225 1580) rotate(240)">25</text>
      </g>
      <Ring cx={450} cy={1750} rx={230} ry={180} fill="#e2e9e2" stroke="#cfd6cf" strokeWidth={3} />
      <Ring cx={440} cy={1780} rx={215} ry={170} fill="#e8ede8" stroke="#cfd6cf" strokeWidth={3} />
      <path d="M310 1653Q320 1600 350 1590Q330 1620 325 1653Z" fill="#fff" />
    </g>

    {/* shackle */}
    <path d={shackle} fill="#747577" />
    <g clipPath="url(#shackleClip)">
      <g fill="none" filter="url(#softer)">
        <path d="M265 -430C300 -580 430 -695 615 -695C780 -695 900 -600 960 -460" stroke="#b0b1b2" strokeWidth="70" />
        <path d="M335 -330C350 -480 450 -605 615 -605C740 -605 840 -500 865 -340" stroke="#4c4d4f" strokeWidth="46" />
        <path d="M930 -270C930 -380 880 -480 800 -570" stroke="#929395" strokeWidth="34" />
        <path d="M320 -290V-380" stroke="#8c8d8f" strokeWidth="20" />
        <path d="M1030 -240V-340" stroke="#5c5d5f" strokeWidth="20" />
      </g>
    </g>

    {/* case */}
    <path d="M320 190L400 148C480 100 560 70 660 70C740 70 790 88 840 108L1025 222C1150 310 1227 470 1227 640C1227 760 1190 850 1130 940L1040 1055C990 1130 900 1220 800 1240Z" fill="url(#body)" stroke="#111" strokeWidth="3" />
    <path d="M223 -300Q310 -280 396 -300L402 146Q320 175 238 228Z" fill="url(#legL)" />
    <path d="M310 -60H399L402 146L320 180Z" fill="url(#legShade)" />
    <path d="M223 -300Q310 -280 396 -300" fill="none" stroke="#111" strokeWidth="3" />
    <path d="M850 -255Q945 -230 1040 -250L1022 350Q1020 372 985 366Q880 300 838 225Z" fill="url(#legR)" />
    <path d="M850 -255Q945 -230 1040 -250M838 215C840 250 900 310 960 350Q1020 385 1022 345V325" fill="none" stroke="#111" strokeWidth="3" />

    <Ring cx={577} cy={706} rx={595} ry={467} fill="url(#rim)" stroke="#111" strokeWidth={3} />
    <Ring cx={556} cy={717} rx={556} ry={437} fill="#69696b" stroke="#111" strokeWidth={3} />
    <Ring cx={551} cy={774} rx={513} ry={403} fill="url(#rim)" stroke="#111" strokeWidth={3} />
    <Ring cx={533} cy={786} rx={475} ry={373} fill="url(#rim)" stroke="#111" strokeWidth={3} />
    <Ring cx={530} cy={793} rx={466} ry={366} fill="none" stroke="#333" strokeWidth={3} />
    <Ring cx={525} cy={799} rx={460} ry={360} fill="url(#edge)" stroke="#0a1a0a" strokeWidth={4} />
    <Ring cx={509} cy={809} rx={427} ry={335} fill="url(#dial)" stroke="#0a1a0a" strokeWidth={3} />

    <g fill="none">
      <path d={majorTicks} stroke="#111" strokeWidth="22" />
      <path d={majorTicks} stroke="#a2a2a2" strokeWidth="14" />
      <path d={minorTicks} stroke="#111" strokeWidth="15" />
      <path d={minorTicks} stroke="#949494" strokeWidth="8" />
    </g>
    <g fontSize="98" fontFamily="Liberation Sans, sans-serif" fill="#9c9c9c" stroke="#111" strokeWidth="8" paintOrder="stroke" textAnchor="middle">
      {dialNumbers.map((d) => (
        <text key={d.n} y="34" transform={`translate(${d.x} ${d.y}) rotate(${d.a})`}>{d.n}</text>
      ))}
    </g>

    <Ring cx={479} cy={827} rx={238} ry={187} fill="#2a702d" stroke="#0a1a0a" strokeWidth={3} />
    <Ring cx={465} cy={841} rx={208} ry={163} fill="url(#cone)" stroke="#0a1a0a" strokeWidth={3} />
    <path d="M340 690Q420 630 540 680L455 760Q380 720 300 750Z" fill="#4a9050" opacity=".7" />
    <path d="M545 685L592 728L500 815L455 762Z" fill="#184f1a" opacity=".8" />
    <path d="M505 1040L600 975Q570 1020 530 1035Z" fill="#4f9152" opacity=".7" />
    <Ring cx={391} cy={896} rx={172} ry={135} fill="url(#knob)" stroke="#0a1a0a" strokeWidth={3} />
    <Ring cx={374} cy={908} rx={136} ry={106} fill="#1d4f1f" stroke="#0a1a0a" strokeWidth={3} />
  </svg>
)

const Triad = () => (
  <svg viewBox="0 -12 110 112" className="absolute bottom-[45px] left-[34px] h-28 w-[110px]" fontSize="21" fontFamily="Open Sans, sans-serif" role="img" aria-label="Axes">
    <path d="M44 66V36" stroke="#2c6b2c" />
    <path d="M44 66L26 76" stroke="#2a2a8a" />
    <path d="M44 66L70 70" stroke="#8a2c2c" />
    <path d="M44 20l9 17H35z" fill="#0b8a10" />
    <path d="M71 61l16 11-17 7q-3-9 1-18z" fill="#7c2020" />
    <path d="M72 62l15 10-17 0q-1-5 2-10z" fill="#e03a3a" />
    <path d="M22 66q7-2 13 4t-1 13q-8 3-15-3-1-9 3-14z" fill="#1010a8" />
    <text x="38" y="17" fill="#1d7a1d">Y</text>
    <text x="91" y="81" fill="#d8402c">X</text>
    <text x="5" y="92" fill="#1c1cb8">Z</text>
  </svg>
)

const ViewCube = () => (
  <svg viewBox="0 0 100 90" className="absolute right-3.5 top-10 h-[90px] w-[100px]" role="img" aria-label="View cube">
    <defs>
      <filter id="cubeShadow" x="-30%" y="-50%" width="160%" height="200%"><feGaussianBlur stdDeviation="4" /></filter>
    </defs>
    <path d="M12 68L55 64L92 68L58 84Z" fill="#888" opacity=".6" filter="url(#cubeShadow)" />
    <g fill="#ebebeb" stroke="#8f8f8f" strokeDasharray="8 3">
      <path d="M17 25L44 17L83 21L62 31Z" fill="#f6f6f6" />
      <path d="M17 25L62 31V82L19 72Z" />
      <path d="M62 31L83 21V65L62 82Z" fill="#e2e2e2" />
    </g>
    <g fontWeight="700" fontFamily="Open Sans, sans-serif" fill="#8d8d8d">
      <text transform="translate(24 55) skewY(6)" fontSize="10">FRONT</text>
      <text transform="translate(65 60) rotate(-28)" fontSize="6">RIGHT</text>
    </g>
    <path d="M43 23q4-3 7 0t6 0M55 22q3 3 6 0" stroke="#999" fill="none" strokeWidth="1.500" />
  </svg>
)

const NavButton = ({ label, className, children }: { label: string; className: string; children: ReactNode }) => (
  <button aria-label={label} className={`flex items-center justify-center ${className}`}>
    <svg viewBox="0 0 24 24" className="h-6 w-6" fill="none" stroke="#999">{children}</svg>
  </button>
)

const NavCaret = ({ className }: { className: string }) => (
  <svg viewBox="0 0 6 3" className={`h-[3px] w-1.5 ${className}`} aria-hidden="true">
    <path d="M0 0h6L3 3z" fill="#888" />
  </svg>
)

const NavBar = () => (
  <div className="absolute right-0 top-36 flex w-9 flex-col items-center rounded-lg border-2 border-[#bcbcbc] bg-[#f3f3f3] pb-1">
    <button aria-label="Close bar" className="mr-1 mt-0.5 self-end">
      <svg viewBox="0 0 8 8" className="h-2 w-2"><circle cx="4" cy="4" r="4" fill="#bbb" /><path d="M2.500 2.500l3 3M5.500 2.500l-3 3" stroke="#fff" /></svg>
    </button>
    <NavButton label="Steering wheel" className="mt-2 h-7">
      <path d="M12 1h11v11A11 11 0 1 1 12 1z" fill="#ececec" />
      <circle cx="12" cy="12" r="8.500" />
      <circle cx="12" cy="12" r="5.500" fill="#f6f6f6" />
      <path d="M6 18l2-2M18 18l-2-2" />
    </NavButton>
    <NavCaret className="mt-1.5" />
    <span className="mt-1 h-px w-[26px] bg-[#bbb]" />
    <NavButton label="Pan" className="mt-1.5 h-6">
      <path d="M7 23C5 19 1 15 1 13c1-2 3-1 5 1L3 5c0-2 2-2 3 0l3 6L8 2c0-2 3-2 3 0l1 8 1-8c0-2 3-2 3 0v9l3-6c1-2 3-1 3 1l-2 9c-1 4-2 5-3 8z" fill="#fafafa" />
    </NavButton>
    <NavButton label="Zoom window" className="mt-2 h-6">
      <path d="M.5 1.500h16v16H.5z" fill="#f6f6f6" />
      <circle cx="16" cy="16" r="5" fill="#fff" />
      <path d="M20 20l4 4" strokeWidth="3" />
    </NavButton>
    <NavCaret className="mt-2" />
    <NavButton label="Orbit" className="mt-2 h-6">
      <ellipse cx="12" cy="12" rx="3.500" ry="11" />
      <ellipse cx="12" cy="12" rx="11" ry="4" />
      <path d="M12 9v6M9 12h6M15 3v5M12.500 5.500h5M18 7v5M15.500 9.500h5" stroke="#777" />
    </NavButton>
    <NavCaret className="mt-2" />
    <NavButton label="Look at" className="mt-2 h-6">
      <path d="M1 7.500h22V23H1z" fill="#f0f0f0" strokeWidth="1.500" />
      <path d="M5 12h14v7H5z" fill="#ddd" />
      <path d="M1 7l6-5v4l10-4v5" />
    </NavButton>
    <NavButton label="View face" className="mt-1 h-6">
      <path d="M5 12l7-7h8l-1 7-5 9H5zM5 12h9l6-7M14 12v9" fill="#fafafa" />
    </NavButton>
    <NavCaret className="mt-1" />
    <NavButton label="Appearance" className="mt-1 h-6">
      <path d="M9 12h7v9H9zM9 12l4-5h7l-4 5M20 7v9l-4 5" fill="#fafafa" />
      <circle cx="9.500" cy="9.500" r="5" fill="#cfe2f5" stroke="#89a9cc" />
    </NavButton>
    <NavCaret className="mt-1" />
    <button aria-label="Options" className="mr-1 mt-2 self-end">
      <svg viewBox="0 0 8 8" className="h-2 w-2"><circle cx="4" cy="4" r="3.500" fill="#eee" stroke="#aaa" /><path d="M2 4h4" stroke="#999" /></svg>
    </button>
  </div>
)

const Viewport = () => (
  <main className="relative min-h-0 flex-1 overflow-hidden bg-white">
    <div className="flex justify-end gap-[7px] pt-[5px] text-[#333]">
      <button aria-label="Minimize document">
        <svg viewBox="0 0 14 14" className="h-3.5 w-3.5"><path d="M3 11h8v2H3z" fill="currentColor" /></svg>
      </button>
      <button aria-label="Tile document">
        <svg viewBox="0 0 14 14" className="h-3.5 w-3.5"><path d="M1.500 2h11v10h-11zM1 3h12M7.500 3v9M8 7.500h5" fill="none" stroke="currentColor" strokeWidth="1.300" /></svg>
      </button>
      <button aria-label="Close document"><X className="h-4 w-4" strokeWidth={3} /></button>
    </div>
    <PadLock />
    <Triad />
    <ViewCube />
    <NavBar />
    <svg viewBox="0 0 12 20" className="absolute left-[374px] top-[105px] h-5 w-3" aria-hidden="true">
      <path d="M.5.500v15l3.500-3.500 3 7 2-1-3-6.500h5z" fill="#fff" stroke="#222" />
    </svg>
  </main>
)

export default function App() {
  return (
    <div className="flex h-screen flex-col overflow-hidden border-b border-black bg-[#d6d6d6] font-[Roboto,sans-serif] text-xs">
      <TitleBar />
      <TabRow />
      <Ribbon />
      <div className="flex min-h-0 flex-1">
        <Browser />
        <div className="flex min-w-0 flex-1 flex-col">
          <Viewport />
          <div className="flex h-6 shrink-0 items-center justify-between bg-[#d6d6d6] pr-1">
            <div className="flex h-full w-[99px] items-center justify-between border-b-[3px] border-[#42a1cf] bg-[#ececec] px-2 text-[#2a8fc4]">
              <button className="whitespace-nowrap">Pad Lock.iam</button>
              <button aria-label="Close tab" className="-mr-1"><X className="h-3.5 w-3.5 text-[#777]" strokeWidth={3} /></button>
            </div>
            <button aria-label="Document list"><Menu className="h-4 w-4 text-[#444]" strokeWidth={3} /></button>
          </div>
        </div>
      </div>
      <footer className="flex h-6 shrink-0 items-center justify-end bg-[#ececec] pl-0.5 pt-0.5 text-[#333]">
        <span className="mr-auto">Ready</span>
        <span className="w-10 border-l border-[#d0d0d0] pl-2 leading-5">22</span>
        <span className="w-[38px] border-x border-[#d0d0d0] pl-2 leading-5">23</span>
      </footer>
    </div>
  )
}
